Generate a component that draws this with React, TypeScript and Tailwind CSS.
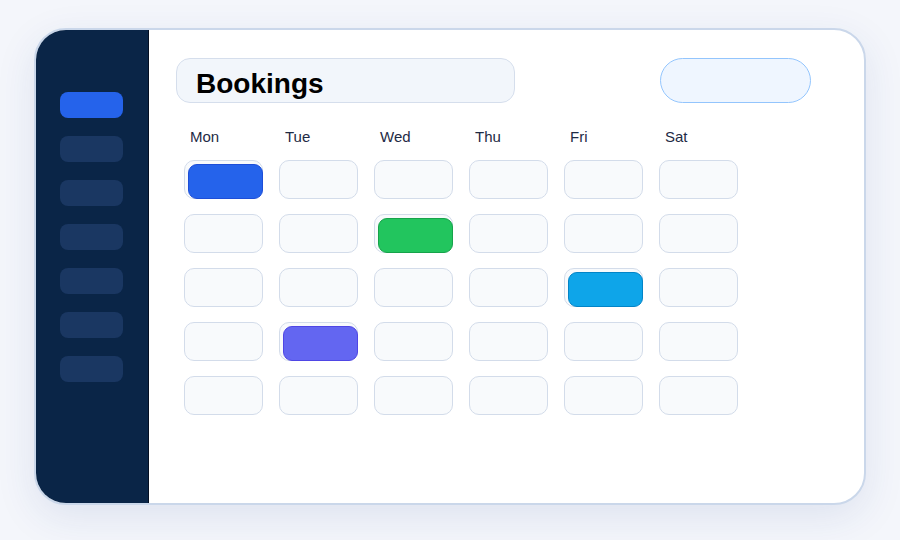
const days = ["Mon", "Tue", "Wed", "Thu", "Fri", "Sat"];

// booked slots: "row-col" -> block colour
const booked: Record<string, string> = {
  "0-0": "bg-[#2563eb] border-[#1d4ed8]",
  "1-2": "bg-[#22c55e] border-[#16a34a]",
  "2-4": "bg-[#0ea5e9] border-[#0284c7]",
  "3-1": "bg-[#6366f1] border-[#4f46e5]",
};

const App = () => {
  return (
    <div
      className="w-[900px] h-[540px] bg-[#f4f6fb] pt-[28px] pl-[34px]"
      style={{ fontFamily: '"Liberation Sans", Arial, sans-serif' }}
    >
      <div className="w-[832px] h-[477px] flex rounded-[32px] border-2 border-[#cad7ea] bg-white overflow-hidden shadow-[0_12px_40px_rgba(30,58,138,0.10)]">
        {/* Sidebar */}
        <div className="w-[113px] shrink-0 bg-[#0a2547] border-r border-[#050f22] pt-[62px] pl-[24px] flex flex-col gap-[18px]">
          <div className="w-[63px] h-[26px] rounded-[8px] bg-[#2563eb]" />
          {[0, 1, 2, 3, 4, 5].map((i) => (
            <div key={i} className="w-[63px] h-[26px] rounded-[8px] bg-[#1a3762]" />
          ))}
        </div>

        {/* Main */}
        <div className="flex-1 pt-[28px] pl-[27px]">
          <div className="flex items-center">
            <div className="w-[339px] h-[45px] rounded-[14px] border border-[#d5deec] bg-[#f2f6fb] flex items-center pl-[19px]">
              <h1 className="text-[28px] font-bold text-black leading-none pt-[7px]">Bookings</h1>
            </div>
            <div className="ml-[145px] w-[151px] h-[45px] rounded-full border border-[#93c5fd] bg-[#eff6ff]" />
          </div>

          <div className="flex mt-[25px]">
            {days.map((d) => (
              <div key={d} className="w-[95px] pl-[14px] text-[15px] leading-[18px] text-[#1e2b45]">
                {d}
              </div>
            ))}
          </div>

          <div className="mt-[14px] pl-[8px] grid grid-cols-[repeat(6,79px)] gap-x-[16px] gap-y-[15px]">
            {[0, 1, 2, 3, 4].map((r) =>
              days.map((_, c) => {
                const block = booked[`${r}-${c}`];
                return (
                  <div
                    key={`${r}-${c}`}
                    className="relative h-[39px] rounded-[10px] border border-[#d3dcea] bg-[#f8fafc]"
                  >
                    {block && (
                      <div
                        className={`absolute top-[3px] left-[3px] right-[-1px] bottom-[-1px] rounded-[9px] border ${block}`}
                      />
                    )}
                  </div>
                );
              })
            )}
          </div>
        </div>
      </div>
    </div>
  );
};

export default App;
